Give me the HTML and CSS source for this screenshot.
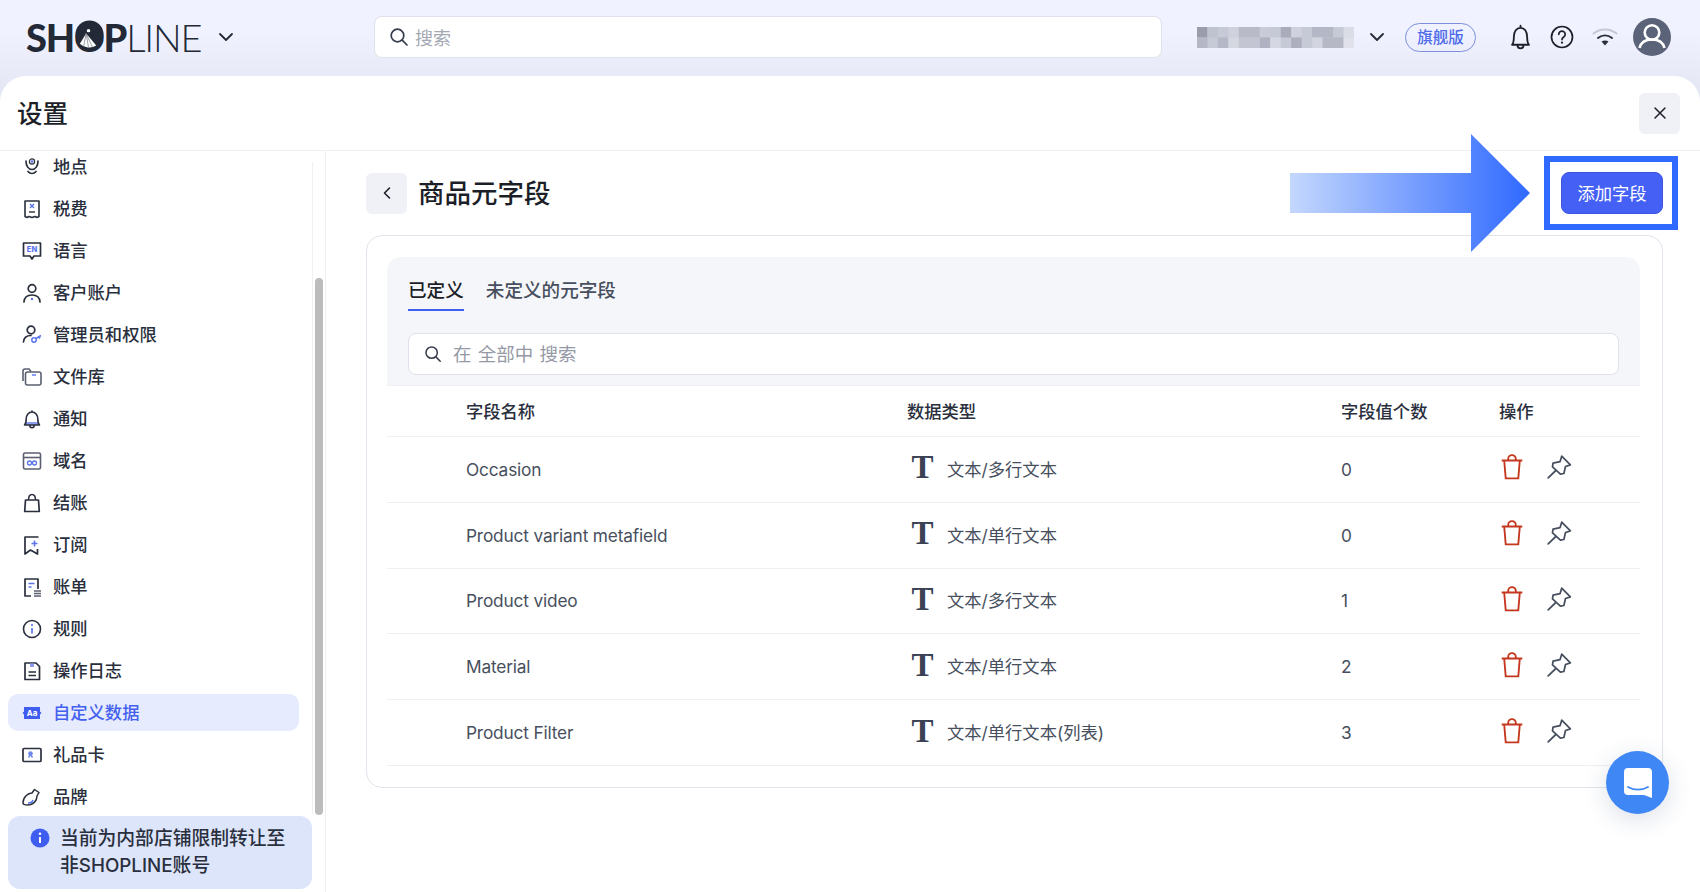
FILE: index.html
```html
<!DOCTYPE html>
<html lang="zh-CN">
<head>
  <meta charset="utf-8">
  <title>商品元字段</title>
  <link rel="stylesheet" href="styles.css">
</head>
<body>
  <svg class="sprite" width="0" height="0">
    <symbol id="i-search" viewBox="0 0 20 20"><circle cx="8.5" cy="8.5" r="6.3" fill="none" stroke="currentColor" stroke-width="1.7"/><path d="M13.2 13.2 18 18" fill="none" stroke="currentColor" stroke-width="1.7" stroke-linecap="round"/></symbol>
    <symbol id="i-chevron" viewBox="0 0 16 10"><path d="M2 2l6 6 6-6" fill="none" stroke="currentColor" stroke-width="1.8" stroke-linecap="round" stroke-linejoin="round"/></symbol>
    <symbol id="i-trash" viewBox="0 0 24 24"><path d="M2.500 6h19M8.500 6V4.500a3.500 3.500 0 0 1 7 0V6M4.800 6l1.400 16.500h11.600L19.200 6" fill="none" stroke="currentColor" stroke-width="1.700" stroke-linejoin="round"/></symbol>
    <symbol id="i-pin" viewBox="0 0 24 24"><path d="M14.500 2 22.500 10l-4.500 1.500-1.500 6.500-3.200.5L6 11.800l.5-3.300L13 7zM9.300 15 2 22" fill="none" stroke="currentColor" stroke-width="1.600" stroke-linejoin="round" stroke-linecap="round"/></symbol>
  </svg>

  <header class="topbar">
    <div class="logo">
      <span class="logo-bold">SH<span class="logo-o">O<svg viewBox="0 0 30 30"><circle cx="15" cy="15" r="14.500" fill="#232936"/><path d="M11.500 14 5 24.500A14 14 0 0 0 22 26.500z" fill="#fff"/><path d="M11.500 14 9 27M11.500 14 14 28.500M11.500 14 18 28" stroke="#7d8290" stroke-width=".8"/><circle cx="14" cy="11" r="1.800" fill="#fff"/></svg></span>P</span><span class="logo-light">LINE</span>
    </div>
    <svg class="logo-caret"><use href="#i-chevron"/></svg>

    <div class="top-search">
      <svg class="icon-search"><use href="#i-search"/></svg>
      <span>搜索</span>
    </div>

    <svg class="store-blur" viewBox="0 0 150 22" width="157" height="21" preserveAspectRatio="none">
      <rect width="150" height="22" fill="#c6c9d6"/>
      <rect x="0" width="10" height="11" fill="#9a9cab"/><rect x="10" width="10" height="11" fill="#bfc2cf"/><rect x="30" width="10" height="11" fill="#cfd1dc"/><rect x="40" width="20" height="11" fill="#b8bac8"/><rect x="60" width="10" height="11" fill="#c9ccd8"/><rect x="80" width="10" height="11" fill="#aaacbb"/><rect x="90" width="10" height="11" fill="#cfd2dd"/><rect x="110" width="20" height="11" fill="#b4b7c5"/><rect x="140" width="10" height="11" fill="#dadce6"/>
      <rect x="0" y="11" width="10" height="11" fill="#b5b7c6"/><rect x="20" y="11" width="10" height="11" fill="#b5b8c6"/><rect x="30" y="11" width="10" height="11" fill="#d5d7e1"/><rect x="40" y="11" width="20" height="11" fill="#c3c5d2"/><rect x="60" y="11" width="10" height="11" fill="#b0b2c1"/><rect x="70" y="11" width="10" height="11" fill="#d5d7e2"/><rect x="90" y="11" width="10" height="11" fill="#adafbe"/><rect x="110" y="11" width="10" height="11" fill="#d2d4df"/><rect x="120" y="11" width="20" height="11" fill="#b6b8c6"/><rect x="140" y="11" width="10" height="11" fill="#e0e1ea"/>
    </svg>
    <svg class="store-caret"><use href="#i-chevron"/></svg>
    <span class="plan-badge">旗舰版</span>

    <svg class="top-icon bell" viewBox="0 0 24 24"><path d="M5 18c1.300-1.500 1.500-3 1.500-6.500C6.500 7 8.800 4 12 4s5.500 3 5.500 7.500c0 3.500.2 5 1.500 6.500zM12 4V2.200M9.500 18.500a2.500 2.500 0 0 0 5 0" fill="none" stroke="#1c1f27" stroke-width="1.500" stroke-linejoin="round" stroke-linecap="round"/></svg>
    <svg class="top-icon help" viewBox="0 0 24 24"><circle cx="12" cy="12" r="10.500" fill="none" stroke="#1c1f27" stroke-width="1.700"/><path d="M8.800 9.300a3.200 3.200 0 1 1 4.900 2.700c-1.100.7-1.700 1.300-1.700 2.600" fill="none" stroke="#1c1f27" stroke-width="1.700" stroke-linecap="round"/><circle cx="12" cy="17.700" r="1.100" fill="#1c1f27"/></svg>
    <svg class="top-icon wifi" viewBox="0 0 26 20"><path d="M1.500 6.500C8 1 18 1 24.500 6.500" fill="none" stroke="#c5c8d2" stroke-width="2" stroke-linecap="round"/><path d="M6 11c4.200-3.200 9.800-3.200 14 0" fill="none" stroke="#2a2f3d" stroke-width="2" stroke-linecap="round"/><path d="M9.500 14.500c2.200-1.300 4.800-1.300 7 0L13 18.500z" fill="#2a2f3d"/></svg>
    <svg class="avatar" viewBox="0 0 38 38"><circle cx="19" cy="19" r="19" fill="#5a6378"/><circle cx="19" cy="14.500" r="7.300" fill="none" stroke="#fff" stroke-width="2.600"/><path d="M6.500 30c1.500-6 6-8.500 12.500-8.500S30 24 31.500 30" fill="none" stroke="#fff" stroke-width="2.600"/></svg>
  </header>

  <div class="panel">
    <div class="panel-head">
      <h1>设置</h1>
      <button class="square-btn close-btn">
        <svg viewBox="0 0 14 14" width="14" height="14"><path d="M2 2l10 10M12 2 2 12" stroke="#1c1f27" stroke-width="1.500" stroke-linecap="round"/></svg>
      </button>
    </div>

    <div class="panel-body">
      <aside class="sidebar">
        <nav class="nav">
          <a class="nav-item"><svg viewBox="0 0 22 22"><path d="M5 5c0 5 2.500 8.500 6 8.500S17 10 17 5M7 15.500c1 1.300 2.500 2 4 2s3-.7 4-2" fill="none" stroke="#2a2f3d" stroke-width="1.700" stroke-linecap="round"/><circle cx="11" cy="5.500" r="2.600" fill="#fff" stroke="#2a2f3d" stroke-width="1.200"/><circle cx="11" cy="5.500" r="1.300" fill="#5b74ee"/></svg>地点</a>
          <a class="nav-item"><svg viewBox="0 0 22 22"><path d="M4 3h14v15.500l-2 1-2-1-3 1-3-1-2 1-2-1z" fill="none" stroke="#2a2f3d" stroke-width="1.600" stroke-linejoin="round"/><path d="M9 6l4 4M13 6l-4 4" stroke="#5b74ee" stroke-width="1.400"/><path d="M8 14h6" stroke="#2a2f3d" stroke-width="1.400"/></svg>税费</a>
          <a class="nav-item"><svg viewBox="0 0 22 22"><path d="M2.500 3h17v13h-6.500L11 19l-2-3H2.500z" fill="none" stroke="#2a2f3d" stroke-width="1.700" stroke-linejoin="round"/><text class="icon-en" x="11" y="12.300" text-anchor="middle">EN</text></svg>语言</a>
          <a class="nav-item"><svg viewBox="0 0 22 22"><circle cx="11" cy="6.500" r="3.800" fill="none" stroke="#2a2f3d" stroke-width="1.700"/><path d="M3 20c.3-5 3.500-7 8-7s7.700 2 8 7" fill="none" stroke="#2a2f3d" stroke-width="1.700" stroke-linecap="round"/><circle cx="11" cy="17" r="1.200" fill="#5b74ee"/></svg>客户账户</a>
          <a class="nav-item"><svg viewBox="0 0 22 22"><circle cx="10" cy="6" r="3.800" fill="none" stroke="#2a2f3d" stroke-width="1.700"/><path d="M2.500 18c.3-4 3-6.500 7.500-6.500" fill="none" stroke="#2a2f3d" stroke-width="1.700" stroke-linecap="round"/><circle cx="13" cy="16" r="2.200" fill="none" stroke="#5b74ee" stroke-width="1.500"/><path d="M15 14.500l5-3M18 13l1 1.500" stroke="#5b74ee" stroke-width="1.500"/></svg>管理员和权限</a>
          <a class="nav-item"><svg viewBox="0 0 22 22"><path d="M2 15V5a2 2 0 0 1 2-2h4l2 2.500" fill="none" stroke="#5a6070" stroke-width="1.600"/><rect x="4.500" y="6" width="15.500" height="13" rx="2" fill="none" stroke="#5a6070" stroke-width="1.600"/><path d="M11 9h4" stroke="#5b74ee" stroke-width="1.400"/></svg>文件库</a>
          <a class="nav-item"><svg viewBox="0 0 22 22"><path d="M5 14h12v3H5z" fill="#8c9bf2"/><path d="M3.500 17c1.200-1 1.700-3 1.700-6 0-4 2.500-7 5.800-7s5.800 3 5.800 7c0 3 .5 5 1.700 6zM11 4V2.500M8.800 17.500a2.200 2.200 0 0 0 4.400 0" fill="none" stroke="#2a2f3d" stroke-width="1.600" stroke-linejoin="round"/></svg>通知</a>
          <a class="nav-item"><svg viewBox="0 0 22 22"><rect x="2.500" y="3" width="17" height="16" rx="1.500" fill="none" stroke="#5a6070" stroke-width="1.600"/><path d="M2.500 7.500h17" stroke="#5a6070" stroke-width="1.600"/><circle cx="8.500" cy="13" r="2" fill="none" stroke="#5b74ee" stroke-width="1.300"/><circle cx="13.500" cy="13" r="2" fill="none" stroke="#5b74ee" stroke-width="1.300"/></svg>域名</a>
          <a class="nav-item"><svg viewBox="0 0 22 22"><path d="M4.500 8h13l.8 11.500H3.700z" fill="none" stroke="#2a2f3d" stroke-width="1.700" stroke-linejoin="round"/><path d="M7.500 8c0-3 1-5.500 3.500-5.500S14.500 5 14.500 8" fill="none" stroke="#2a2f3d" stroke-width="1.500"/></svg>结账</a>
          <a class="nav-item"><svg viewBox="0 0 22 22"><path d="M17.500 3H4v17l5.500-4 7 4v-5" fill="none" stroke="#2a2f3d" stroke-width="1.700" stroke-linejoin="round"/><path d="M13.500 6.500v6M10.500 9.500h6" stroke="#5b74ee" stroke-width="1.600"/></svg>订阅</a>
          <a class="nav-item"><svg viewBox="0 0 22 22"><path d="M10 20H4V3h13v10" fill="none" stroke="#2a2f3d" stroke-width="1.700" stroke-linejoin="round"/><path d="M7.500 7.500h6M7.500 11h3" stroke="#5b74ee" stroke-width="1.500"/><path d="M13 15h7M13 17.500h7M13 20h7" stroke="#5a6070" stroke-width="1.300"/></svg>账单</a>
          <a class="nav-item"><svg viewBox="0 0 22 22"><circle cx="11" cy="11" r="8.500" fill="none" stroke="#2a2f3d" stroke-width="1.600"/><path d="M11 10v5.500" stroke="#5b74ee" stroke-width="1.700"/><circle cx="11" cy="7" r="1.100" fill="#5b74ee"/></svg>规则</a>
          <a class="nav-item"><svg viewBox="0 0 22 22"><path d="M4 3h11l3.500 3.500V19.500H4z" fill="none" stroke="#2a2f3d" stroke-width="1.700" stroke-linejoin="round"/><path d="M9 3.500v3.500h4V3.500" fill="#8c9bf2"/><path d="M7.500 12h7.500M7.500 15.500h7.500" stroke="#2a2f3d" stroke-width="1.500"/></svg>操作日志</a>
          <a class="nav-item active"><svg viewBox="0 0 22 22"><path d="M3 5h16v4.500l1.500 1.500L19 12.500V17H3v-4.500L1.500 11 3 9.500z" fill="#3f5ef0"/><text class="icon-aa" x="11" y="14" text-anchor="middle">Aa</text></svg>自定义数据</a>
          <a class="nav-item"><svg viewBox="0 0 22 22"><rect x="2" y="4.500" width="18" height="13" rx="1" fill="none" stroke="#2a2f3d" stroke-width="1.700"/><circle cx="9.500" cy="9.500" r="2.300" fill="#6f86f0"/><path d="M7.500 13.500l2-3 2 3" fill="none" stroke="#6f86f0" stroke-width="1.400"/></svg>礼品卡</a>
          <a class="nav-item"><svg viewBox="0 0 22 22"><path d="M2 17c0-6 5-10 9-10l2.500-3.500 4.500 3-2 3.500c0 5-4 9-9 9-3 0-5-.5-5-2z" fill="none" stroke="#2a2f3d" stroke-width="1.500" stroke-linejoin="round"/><path d="M7 17c2.500 0 4.500-1 5-3" fill="none" stroke="#5b74ee" stroke-width="1.500"/></svg>品牌</a>
        </nav>
        <div class="scroll-track"><div class="scroll-thumb"></div></div>
        <div class="notice">
          <svg viewBox="0 0 20 20" width="20" height="20"><circle cx="10" cy="10" r="9.500" fill="#3f5ef0"/><path d="M10 9v6" stroke="#fff" stroke-width="2"/><circle cx="10" cy="5.800" r="1.300" fill="#fff"/></svg>
          <p>当前为内部店铺限制转让至<br>非SHOPLINE账号</p>
        </div>
      </aside>

      <main class="content">
        <div class="page-head">
          <button class="square-btn">
            <svg viewBox="0 0 10 14" width="10" height="14"><path d="M7.500 2 2.500 7l5 5" fill="none" stroke="#1c1f27" stroke-width="1.600" stroke-linecap="round" stroke-linejoin="round"/></svg>
          </button>
          <h2>商品元字段</h2>
          <button class="primary-btn">添加字段</button>
        </div>

        <section class="card">
          <div class="filter-area">
            <div class="tabs">
              <span class="tab active">已定义</span>
              <span class="tab">未定义的元字段</span>
            </div>
            <div class="list-search">
              <svg class="icon-search"><use href="#i-search"/></svg>
              <span>在 全部中 搜索</span>
            </div>
          </div>

          <div class="row head-row">
            <span class="col-name">字段名称</span><span>数据类型</span><span>字段值个数</span><span>操作</span>
          </div>
          <div class="row">
            <span class="col-name">Occasion</span>
            <span class="type"><b>T</b>文本/多行文本</span><span>0</span>
            <span class="actions"><svg class="trash"><use href="#i-trash"/></svg><svg class="pin"><use href="#i-pin"/></svg></span>
          </div>
          <div class="row">
            <span class="col-name">Product variant metafield</span>
            <span class="type"><b>T</b>文本/单行文本</span><span>0</span>
            <span class="actions"><svg class="trash"><use href="#i-trash"/></svg><svg class="pin"><use href="#i-pin"/></svg></span>
          </div>
          <div class="row">
            <span class="col-name">Product video</span>
            <span class="type"><b>T</b>文本/多行文本</span><span>1</span>
            <span class="actions"><svg class="trash"><use href="#i-trash"/></svg><svg class="pin"><use href="#i-pin"/></svg></span>
          </div>
          <div class="row">
            <span class="col-name">Material</span>
            <span class="type"><b>T</b>文本/单行文本</span><span>2</span>
            <span class="actions"><svg class="trash"><use href="#i-trash"/></svg><svg class="pin"><use href="#i-pin"/></svg></span>
          </div>
          <div class="row">
            <span class="col-name">Product Filter</span>
            <span class="type"><b>T</b>文本/单行文本(列表)</span><span>3</span>
            <span class="actions"><svg class="trash"><use href="#i-trash"/></svg><svg class="pin"><use href="#i-pin"/></svg></span>
          </div>
        </section>
      </main>
    </div>
  </div>

  <!-- annotation drawn over the page -->
  <svg class="callout-arrow" viewBox="0 0 240 118" width="240" height="118">
    <defs>
      <linearGradient id="arrowFill" x1="0" x2="1" y1="0" y2="0">
        <stop offset="0" stop-color="#c4d7fd"/>
        <stop offset="1" stop-color="#2f69ff"/>
      </linearGradient>
    </defs>
    <polygon points="0,39 181,39 181,0 240,59 181,118 181,79 0,79" fill="url(#arrowFill)"/>
  </svg>
  <div class="callout-box"></div>

  <button class="chat-btn">
    <svg viewBox="0 0 30 32" width="30" height="32"><path d="M5 1h20a4 4 0 0 1 4 4v26l-8-3H5a4 4 0 0 1-4-4V5a4 4 0 0 1 4-4z" fill="#fff"/><path d="M5 20c6 3.500 14 3.500 20 0" fill="none" stroke="#3f87f5" stroke-width="1.800" stroke-linecap="round"/></svg>
  </button>
</body>
</html>
```

FILE: styles.css
```css
:root {
  --text: #2a2f3d;
  --text-soft: #474f5e;
  --muted: #a3a8b5;
  --primary: #4460f5;
  --line: #eff0f3;
  --btn-bg: #f0f1f7;
}

* {
  box-sizing: border-box;
}

html, body {
  margin: 0;
  height: 892px;
  overflow: hidden;
}

body {
  position: relative;
  display: flex;
  flex-direction: column;
  font-family: Inter, "Noto Sans CJK SC", sans-serif;
  font-size: 17.3px;
  color: var(--text);
  background: linear-gradient(#f0f3ff 0, #f0f3ff 30px, #e3e6f2 100px);
}

.sprite {
  position: absolute;
}

/* Top bar */
.topbar {
  display: flex;
  align-items: center;
  height: 76px;
  flex: none;
  padding: 0 0 2px 26px;
}

.logo {
  width: 173px;
  font-family: Lato, sans-serif;
  font-size: 38px;
  line-height: 1;
  letter-spacing: -1.2px;
  white-space: nowrap;
  color: #232936;
}

.logo-bold {
  font-weight: 900;
}

.logo-light {
  font-weight: 300;
}

.logo-o {
  position: relative;
}

.logo-o svg {
  position: absolute;
  left: 1px;
  top: 6px;
  width: 29px;
  height: 29px;
}

.logo-caret {
  width: 16px;
  height: 10px;
  margin-left: 19px;
  color: #232936;
}

.top-search {
  display: flex;
  align-items: center;
  gap: 6px;
  width: 788px;
  height: 42px;
  margin-left: 140px;
  padding-left: 14px;
  font-size: 18px;
  color: var(--muted);
  background: #fff;
  border: 1px solid #dfe2ea;
  border-radius: 8px;
}

.icon-search {
  width: 20px;
  height: 20px;
  color: #363c4b;
}

.store-blur {
  margin-left: 35px;
}

.store-caret {
  width: 16px;
  height: 10px;
  margin-left: 15px;
  color: #232936;
}

.plan-badge {
  display: flex;
  align-items: center;
  justify-content: center;
  width: 71px;
  height: 29px;
  margin-left: 20px;
  padding-bottom: 2px;
  font-size: 15.5px;
  font-weight: 500;
  color: #4f6bea;
  border: 1.5px solid #7c8fd8;
  border-radius: 15px;
}

.top-icon {
  width: 24px;
  height: 24px;
}

.bell {
  width: 29px;
  height: 29px;
  margin-left: 30px;
}

.help {
  margin-left: 15px;
}

.wifi {
  width: 26px;
  height: 20px;
  margin-left: 18px;
}

.avatar {
  width: 38px;
  height: 38px;
  margin-left: 15px;
}

/* White panel */
.panel {
  flex: 1;
  display: flex;
  flex-direction: column;
  min-height: 0;
  background: #fff;
  border-radius: 26px 26px 0 0;
}

.panel-head {
  display: flex;
  align-items: center;
  justify-content: space-between;
  height: 75px;
  flex: none;
  padding: 0 20px 0 17px;
  border-bottom: 1px solid var(--line);
}

h1 {
  margin: 0 0 4px;
  font-size: 25.5px;
  font-weight: 500;
  color: #1c1f27;
}

.square-btn {
  display: flex;
  align-items: center;
  justify-content: center;
  width: 41px;
  height: 41px;
  padding: 0;
  flex: none;
  background: var(--btn-bg);
  border: none;
  border-radius: 6px;
}

.panel-body {
  flex: 1;
  display: flex;
  min-height: 0;
}

/* Sidebar */
.sidebar {
  position: relative;
  display: flex;
  flex-direction: column;
  width: 326px;
  flex: none;
  border-right: 1px solid var(--line);
}

.nav {
  flex: 1;
  display: flex;
  flex-direction: column;
  gap: 5px;
  min-height: 0;
  overflow: hidden;
}

.nav-item {
  display: flex;
  align-items: center;
  gap: 9px;
  width: 291px;
  height: 37px;
  flex: none;
  margin-left: 8px;
  padding: 0 0 3px 13px;
  font-weight: 500;
  color: var(--text);
  border-radius: 10px;
}

.nav-item:first-child {
  margin-top: -3px;
}

.nav-item svg {
  width: 22px;
  height: 22px;
  flex: none;
  margin: 3px 1px 0 0;
}

.nav-item.active {
  color: #4460f0;
  background: #e6ebfd;
}

.icon-en {
  font-size: 7.5px;
  font-weight: 800;
  fill: #5b74ee;
}

.icon-aa {
  font-size: 8px;
  font-weight: 700;
  fill: #fff;
}

.scroll-track {
  position: absolute;
  top: 11px;
  right: 0;
  bottom: 78px;
  width: 13px;
  border-left: 1px solid var(--line);
}

.scroll-thumb {
  position: absolute;
  top: 116px;
  bottom: -1px;
  left: 2px;
  width: 8px;
  background: #bcbcbc;
  border-radius: 4px;
}

.notice {
  position: relative;
  display: flex;
  gap: 10px;
  height: 73px;
  flex: none;
  margin: 0 13px 3px 8px;
  padding: 9px 10px 0 22px;
  font-size: 18.8px;
  font-weight: 500;
  background: #dde5fb;
  border-radius: 12px;
}

.notice svg {
  flex: none;
  margin-top: 3px;
}

.notice p {
  margin: 0;
  line-height: 27px;
  white-space: nowrap;
}

/* Main content */
.content {
  flex: 1;
  min-width: 0;
  padding: 21px 37px 0 40px;
}

.page-head {
  display: flex;
  align-items: center;
  gap: 11px;
  height: 42px;
}

h2 {
  flex: 1;
  margin: 0 0 4px;
  font-size: 26.5px;
  font-weight: 500;
  color: #1c1f27;
}

.primary-btn {
  width: 102px;
  height: 42px;
  padding: 0 0 2px;
  font-family: inherit;
  font-size: 17.3px;
  color: #fff;
  background: var(--primary);
  border: 1px solid #3d55dc;
  border-radius: 8px;
}

.card {
  margin-top: 21px;
  padding: 21px 22px 21px 20px;
  background: #fff;
  border: 1.5px solid #e2e4ec;
  border-radius: 16px;
}

.filter-area {
  height: 129px;
  padding: 20px 21px 0;
  background: #f5f6fa;
  border-radius: 14px 14px 0 0;
  border-bottom: 1px solid var(--line);
}

.tabs {
  display: flex;
  gap: 22px;
  height: 34px;
}

.tab {
  height: 34px;
  padding-bottom: 8px;
  font-size: 18.6px;
  line-height: 26px;
  color: var(--text-soft);
  font-weight: 500;
}

.tab.active {
  color: #1c1f27;
  border-bottom: 2.5px solid #3f5ef0;
}

.list-search {
  display: flex;
  align-items: center;
  gap: 11px;
  height: 42px;
  margin-top: 22px;
  padding: 0 0 3px 15px;
  font-size: 18.5px;
  word-spacing: 1px;
  color: #9599a6;
  background: #fff;
  border: 1.5px solid #dfe2ea;
  border-radius: 8px;
}

.list-search .icon-search {
  width: 18px;
  height: 18px;
  margin-top: 3px;
}

/* Table rows share one grid */
.row {
  display: grid;
  grid-template-columns: 520px 434px 158px 1fr;
  align-items: center;
  height: 65.8px;
  color: var(--text-soft);
  border-bottom: 1.5px solid var(--line);
}

.head-row {
  height: 51px;
  padding-bottom: 2px;
  font-weight: 500;
  color: var(--text);
}

.col-name {
  padding-left: 79px;
  letter-spacing: -0.17px;
}

.head-row .col-name {
  letter-spacing: 0;
}

.type {
  display: flex;
  align-items: center;
  gap: 11px;
  padding: 0 0 2px 2px;
}

.type b {
  width: 27px;
  font-family: "Liberation Serif", serif;
  font-size: 33px;
  line-height: 1;
  text-align: center;
  color: #3b4256;
  margin-top: -1px;
}

.actions {
  display: flex;
  align-items: center;
  gap: 21px;
  margin-top: -4px;
}

.trash {
  width: 26px;
  height: 26px;
  color: #c4361e;
}

.pin {
  width: 26px;
  height: 26px;
  color: #474f5e;
}

/* Overlays */
.callout-arrow {
  position: absolute;
  left: 1290px;
  top: 134px;
}

.callout-box {
  position: absolute;
  left: 1544px;
  top: 156px;
  width: 134px;
  height: 74px;
  border: 6px solid #2f69ff;
}

.chat-btn {
  position: absolute;
  left: 1606px;
  top: 751px;
  display: flex;
  align-items: center;
  justify-content: center;
  width: 63px;
  height: 63px;
  padding: 0;
  background: #3f87f5;
  border: none;
  border-radius: 50%;
  box-shadow: 0 6px 24px rgba(40, 60, 110, 0.16);
}
```
